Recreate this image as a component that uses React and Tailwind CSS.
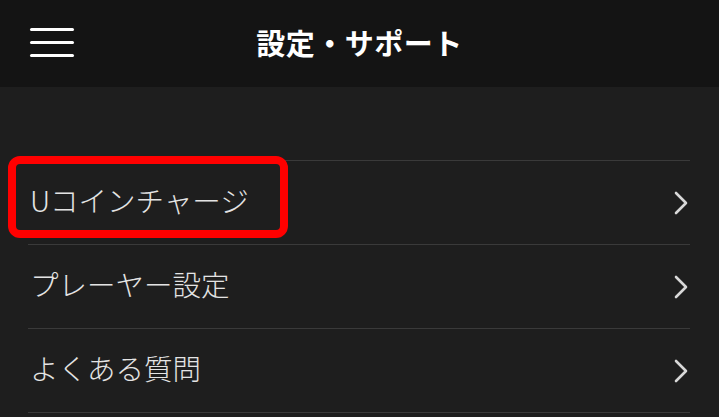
const ITEMS = ["Uコインチャージ", "プレーヤー設定", "よくある質問"];

function Chevron() {
  return (
    <svg width="16" height="26" viewBox="0 0 16 26" fill="none">
      <path
        d="M3 3 L13 13 L3 23"
        stroke="#d8d8d8"
        strokeWidth="2.6"
        strokeLinecap="round"
        strokeLinejoin="round"
      />
    </svg>
  );
}

export default function App() {
  return (
    <div
      className="w-[719px] h-[417px] overflow-hidden bg-[#1e1e1e] relative"
      style={{ fontFamily: '"Noto Sans CJK JP", "Noto Sans", sans-serif' }}
    >
      {/* Header */}
      <div className="h-[87px] bg-[#141414] relative flex items-center justify-center">
        <div className="absolute left-[30px] top-[28px] flex flex-col gap-[10px]">
          <span className="block w-[44px] h-[3px] bg-white rounded-full" />
          <span className="block w-[44px] h-[3px] bg-white rounded-full" />
          <span className="block w-[44px] h-[3px] bg-white rounded-full" />
        </div>
        <h1 className="text-white text-[29px] font-bold tracking-[0.5px] leading-none -mt-[2px]">
          設定・サポート
        </h1>
      </div>

      {/* List */}
      <div className="pt-[73px] ml-[28px] mr-[29px]">
        <ul className="border-t border-[#3a3a3a]">
          {ITEMS.map((label) => (
            <li
              key={label}
              className="h-[84px] border-b border-[#3a3a3a] flex items-center justify-between pl-[2px] pr-[1px]"
            >
              <span className="text-[#e4e4e4] text-[28.5px] font-light leading-none -mt-[4px]">
                {label}
              </span>
              <Chevron />
            </li>
          ))}
        </ul>
      </div>

      {/* Highlight */}
      <div className="absolute left-[8px] top-[156px] w-[280px] h-[82px] border-[8px] border-[#ff0000] rounded-[12px]" />
    </div>
  );
}
